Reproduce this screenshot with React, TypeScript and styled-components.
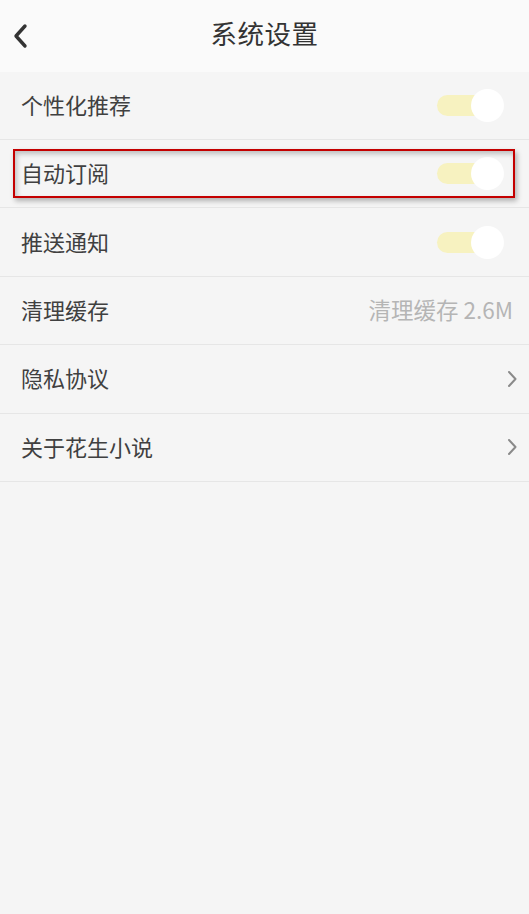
import React from "react";
import styled, { createGlobalStyle } from "styled-components";

const Global = createGlobalStyle`
  html, body { margin: 0; padding: 0; background: #f5f5f5; }
  body { font-family: "Noto Sans CJK SC", "Noto Sans", sans-serif; }
  * { box-sizing: border-box; }
`;

const Page = styled.div`
  position: relative;
  width: 529px;
  min-height: 914px;
  background: #f5f5f5;
`;

const Header = styled.header`
  height: 72px;
  background: #fafafa;
  display: flex;
  align-items: center;
  justify-content: center;
  position: relative;
  padding-bottom: 7px;
`;

const BackButton = styled.button`
  position: absolute;
  left: 8px;
  top: 20px;
  width: 24px;
  height: 32px;
  padding: 0;
  border: none;
  background: transparent;
  display: flex;
  align-items: center;
  justify-content: center;
`;

const Title = styled.h1`
  margin: 0;
  font-size: 26.5px;
  font-weight: 400;
  color: #333;
  letter-spacing: 0.5px;
`;

const List = styled.div`
  display: flex;
  flex-direction: column;
`;

const Row = styled.div<{ $first?: boolean }>`
  height: ${(p) => (p.$first ? "68px" : "68.4px")};
  display: flex;
  align-items: center;
  justify-content: space-between;
  padding: 0 16px 0 21px;
  border-bottom: 1px solid #e6e6e6;
  background: #f5f5f5;
`;

const Label = styled.span`
  font-size: 22px;
  color: #404040;
  margin-top: -3px;
`;

const Value = styled.span`
  font-family: "Noto Sans CJK SC", Roboto, sans-serif;
  font-size: 22.5px;
  color: #b5b5b5;
  margin-top: -3px;
`;

const Track = styled.div`
  position: relative;
  width: 50px;
  height: 21px;
  margin-right: 26px;
  border-radius: 11px;
  background: #f7f2c0;
`;

const Knob = styled.div`
  position: absolute;
  right: -17px;
  top: -6px;
  width: 33px;
  height: 33px;
  border-radius: 50%;
  background: #ffffff;
`;

const ChevronWrap = styled.span`
  display: flex;
  margin-right: -5px;
`;

const Highlight = styled.div`
  position: absolute;
  left: 13px;
  top: 149px;
  width: 502px;
  height: 49px;
  border: 2px solid #c40000;
  box-shadow: 2px 3px 5px rgba(0, 0, 0, 0.28), inset 2px 3px 5px rgba(0, 0, 0, 0.22);
  pointer-events: none;
`;

const Toggle = () => (
  <Track>
    <Knob />
  </Track>
);

const Chevron = () => (
  <ChevronWrap>
    <svg width="12" height="18" viewBox="0 0 12 18">
      <path d="M3 2 L9.5 9 L3 16" fill="none" stroke="#8a8a8a" strokeWidth="2" strokeLinecap="round" strokeLinejoin="round" />
    </svg>
  </ChevronWrap>
);

export default function App() {
  return (
    <>
      <Global />
      <Page>
        <Header>
          <BackButton aria-label="返回">
            <svg width="18" height="28" viewBox="0 0 18 28">
              <path d="M14 4 L5 14 L14 24" fill="none" stroke="#333" strokeWidth="3.4" strokeLinecap="round" strokeLinejoin="round" />
            </svg>
          </BackButton>
          <Title>系统设置</Title>
        </Header>
        <List>
          <Row $first>
            <Label>个性化推荐</Label>
            <Toggle />
          </Row>
          <Row>
            <Label>自动订阅</Label>
            <Toggle />
          </Row>
          <Row>
            <Label>推送通知</Label>
            <Toggle />
          </Row>
          <Row>
            <Label>清理缓存</Label>
            <Value>清理缓存 2.6M</Value>
          </Row>
          <Row>
            <Label>隐私协议</Label>
            <Chevron />
          </Row>
          <Row>
            <Label>关于花生小说</Label>
            <Chevron />
          </Row>
        </List>
        <Highlight />
      </Page>
    </>
  );
}
